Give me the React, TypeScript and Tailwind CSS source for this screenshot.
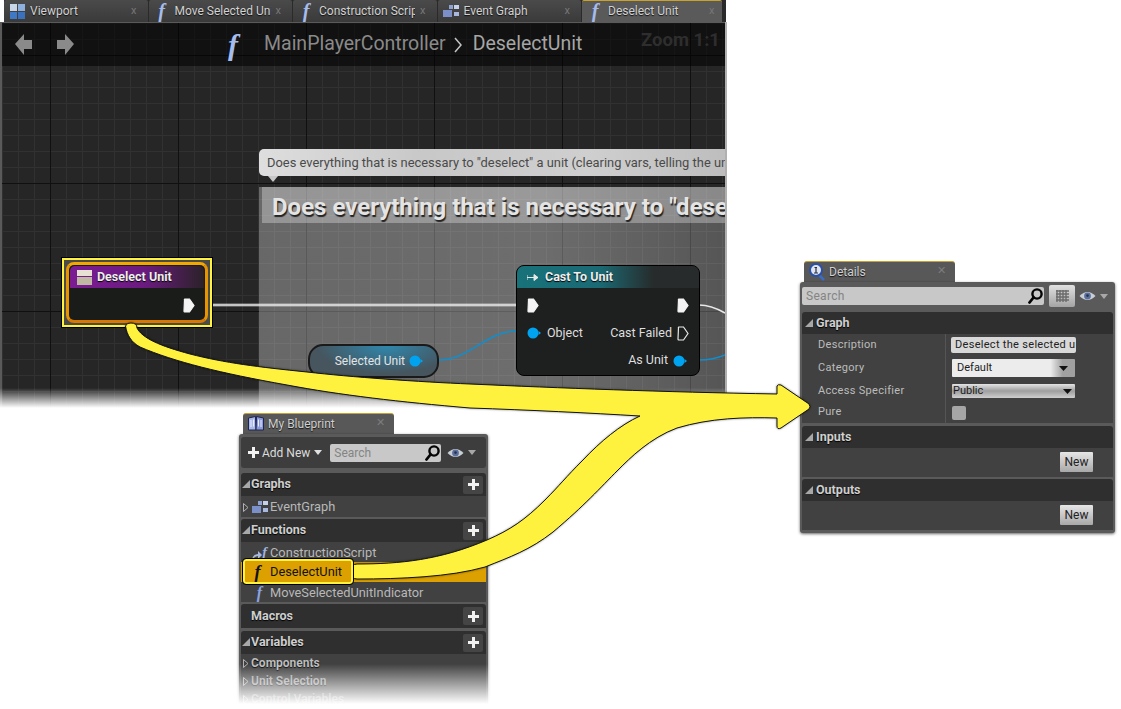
import React from 'react'

const Fn = ({ className = '' }: { className?: string }) => (
  <span className={`font-['Liberation_Serif',serif] italic font-bold leading-none ${className}`}>f</span>
)

const GridIcon = ({ size = 15 }: { size?: number }) => (
  <svg width={size} height={size} viewBox="0 0 15 15">
    <rect x="0" y="0" width="7" height="7" fill="#c8d4e8" />
    <rect x="8" y="0" width="7" height="7" fill="#8fb0dc" />
    <rect x="0" y="8" width="7" height="7" fill="#3f78c4" />
    <rect x="8" y="8" width="7" height="7" fill="#3a70bc" />
  </svg>
)

const GraphIcon = ({ w = 16, h = 13 }: { w?: number; h?: number }) => (
  <svg width={w} height={h} viewBox="0 0 16 13">
    <rect x="6" y="0" width="4" height="4" fill="#8ea2d4" />
    <rect x="11" y="0" width="5" height="4" fill="#c5d0ea" />
    <rect x="0" y="5" width="9" height="7" fill="#7b90c8" />
    <rect x="11" y="7" width="5" height="4" fill="#a9b8de" />
  </svg>
)

const BookIcon = () => (
  <svg width="16" height="15" viewBox="0 0 16 15">
    <path d="M0.5 2 L7.5 0.5 L8 14 L0.5 14 Z" fill="#aab8e8" stroke="#1c2550" strokeWidth="1" />
    <path d="M15.5 2 L8.5 0.5 L8 14 L15.5 14 Z" fill="#8c9ad8" stroke="#1c2550" strokeWidth="1" />
    <path d="M3 4v7M5.5 3.5v7M10.5 3.5v7M13 4v7" stroke="#e8ecff" strokeWidth="1" />
  </svg>
)

const InfoIcon = () => (
  <svg width="16" height="18" viewBox="0 0 16 18">
    <path d="M10 12 L15 17" stroke="#3a6cc8" strokeWidth="2.5" />
    <circle cx="7" cy="7" r="6" fill="#dfe4ee" stroke="#2a50a8" strokeWidth="2" />
    <path d="M5.5 4.5h2.5M7 4.5v5M5 10h4" stroke="#27304a" strokeWidth="1.2" fill="none" />
  </svg>
)

const Eye = () => (
  <span className="flex items-center gap-[4px]">
    <svg width="17" height="10" viewBox="0 0 17 10">
      <path d="M0.5 5 Q8.5 -3 16.5 5 Q8.5 13 0.5 5 Z" fill="#c9ced6" />
      <circle cx="8.5" cy="5" r="3.4" fill="#5b6f9c" />
      <circle cx="8.5" cy="4.6" r="1.3" fill="#27324f" />
    </svg>
    <svg width="8" height="5" viewBox="0 0 8 5"><path d="M0 0h8L4 5z" fill="#a8a8a8" /></svg>
  </span>
)

const Magnifier = () => (
  <svg width="15" height="16" viewBox="0 0 15 16">
    <circle cx="9" cy="6" r="4.6" fill="none" stroke="#050505" strokeWidth="2.4" />
    <path d="M5.5 9.5 L1.5 14.5" stroke="#050505" strokeWidth="2.8" strokeLinecap="round" />
  </svg>
)

const ExecPin = ({ hollow = false }: { hollow?: boolean }) => (
  <svg width="12" height="15" viewBox="0 0 12 15">
    <path
      d="M1.5 1.5 Q1 1 2 1 L6.5 1 L11 7.5 L6.5 14 L2 14 Q1 14 1 13 Z"
      fill={hollow ? 'none' : '#f4f4f4'}
      stroke={hollow ? '#e8e8e8' : '#f4f4f4'}
      strokeWidth="1.2"
    />
  </svg>
)

const DataPin = () => (
  <svg width="14" height="12" viewBox="0 0 14 12">
    <circle cx="6" cy="6" r="5.5" fill="#00a3ef" />
    <path d="M11.5 4 L14 6 L11.5 8 Z" fill="#00a3ef" />
  </svg>
)

const PlusBtn = () => (
  <span className="w-[20px] h-[18px] rounded-[2px] bg-[#454545] flex items-center justify-center mr-[3px]">
    <svg width="11" height="11" viewBox="0 0 11 11"><path d="M4 0h3v4h4v3H7v4H4V7H0V4h4z" fill="#f2f2f2" /></svg>
  </span>
)

const Tri = () => (
  <svg width="8" height="8" viewBox="0 0 8 8" className="shrink-0"><path d="M8 0v8H0z" fill="#a8a8a8" /></svg>
)

const Open = () => (
  <svg width="6" height="9" viewBox="0 0 6 9" className="shrink-0"><path d="M0.5 0.5L5 4.5L0.5 8.5Z" fill="none" stroke="#b0b0b0" /></svg>
)

type TabProps = { icon: React.ReactNode; label: string; active?: boolean }

const Tab = ({ icon, label, active }: TabProps) => (
  <div
    className={`h-[22px] shrink-0 flex items-center rounded-t-[2px] ${
      active ? 'w-[140px] pb-px bg-[#5a5a5a] border-t border-[#c9a227]' : 'w-[143.5px] bg-[linear-gradient(#4a4a4a,#3a3a3a)]'
    }`}
  >
    <span className="w-[26px] flex justify-center shrink-0">{icon}</span>
    <span className="w-[96px] overflow-hidden whitespace-nowrap text-[12px] text-[#d2d2d2] [text-shadow:0_1px_1px_#111]">{label}</span>
    <span className="ml-[5px] text-[11px] text-[#777]">x</span>
  </div>
)

const PanelTab = ({ icon, label, className }: { icon: React.ReactNode; label: string; className: string }) => (
  <div className={`h-[22px] bg-[#585858] rounded-t-[3px] border-t border-[#c9a227] flex items-center pl-[5px] pb-[2px] ${className}`}>
    <span className="w-[20px] shrink-0 flex">{icon}</span>
    <span className="text-[12px] text-[#d0d0d0] [text-shadow:0_1px_1px_#111]">{label}</span>
    <span className="ml-auto mr-[9px] text-[11px] text-[#7c7c7c]">✕</span>
  </div>
)

const Header = ({ title, plus, open = true, wide }: { title: string; plus?: boolean; open?: boolean; wide?: boolean }) => (
  <div className="flex items-center bg-[#2f2f2f] rounded-t-[3px] text-[12.5px] font-bold text-[#cfcfcf] [text-shadow:0_1px_1px_#000] h-full">
    <span className={`flex justify-end -mt-[1px] ${wide ? 'w-[11px] mr-[3px]' : 'w-[9px] mr-[1px]'}`}>{open && <Tri />}</span>
    <span>{title}</span>
    {plus && <span className="ml-auto"><PlusBtn /></span>}
  </div>
)

const DetailRow = ({ label, h, children }: { label: string; h: string; children: React.ReactNode }) => (
  <div className={`flex items-center ${h}`}>
    <span className="w-[143px] pl-[16px] text-[11px] tracking-[0.3px] text-[#bcbcbc]">{label}</span>
    <span className="border-l border-[#555] h-full flex items-center pl-[5px]">{children}</span>
  </div>
)

const NewBtn = () => (
  <div className="flex-1 flex justify-end items-start pt-[4px] pr-[20px] bg-[#414141]">
    <span className="w-[33px] h-[20px] flex items-center justify-center text-[12px] text-[#222] rounded-[1px] bg-[linear-gradient(#e6e6e6,#a8a8a8)]">New</span>
  </div>
)

const Details = () => (
  <div className="absolute left-[800px] top-[261px] w-[315px]">
    <PanelTab className="ml-[4px] w-[151px]" icon={<InfoIcon />} label="Details" />
    <div className="h-[251px] -mt-px bg-[#5a5a5a] rounded-[3px] shadow-[0_1px_3px_rgba(0,0,0,0.6)] pt-[3px] px-[2px] pb-[3px] flex flex-col relative">
      <div className="flex items-center h-[22px] mb-[5px]">
        <div className="w-[242px] h-[18px] bg-[#c8c8c8] rounded-[2px] flex items-center justify-between pl-[4px] pr-[1px] text-[12px] text-[#848484] tracking-[0.3px]">
          Search <Magnifier />
        </div>
        <div className="ml-[5px] w-[26px] h-[22px] rounded-[2px] bg-[linear-gradient(#e0e0e0,#a4a4a4)] flex items-center justify-center">
          <svg width="13" height="13" viewBox="0 0 13 13">
            <path d="M0 1h13M0 4h13M0 7h13M0 10h13M1 0v12M4 0v12M7 0v12M10 0v12" stroke="#6c6c6c" strokeWidth="1.4" />
          </svg>
        </div>
        <span className="ml-[4px]"><Eye /></span>
      </div>
      <div className="h-[22px]"><Header wide title="Graph" /></div>
      <div className="h-[89px] bg-[#414141] flex flex-col text-[11px]">
        <DetailRow label="Description" h="h-[22px]">
          <span className="w-[125px] h-[16px] rounded-[2px] bg-[#d8d8d8] text-[#222] px-[4px] overflow-hidden whitespace-nowrap leading-[16px] tracking-[0.3px]">Deselect the selected unit</span>
        </DetailRow>
        <DetailRow label="Category" h="h-[24px]">
          <span className="w-[123px] h-[18px] ml-[1px] rounded-[1px] bg-[linear-gradient(90deg,#ececec_80%,#a0a0a0_90%)] flex items-center justify-between pl-[5px] pr-[7px] text-[#1c1c1c]">
            Default <svg width="9" height="5" viewBox="0 0 9 5"><path d="M0 0h9L4.5 5z" fill="#111" /></svg>
          </span>
        </DetailRow>
        <DetailRow label="Access Specifier" h="h-[22px]">
          <span className="w-[123px] h-[14px] ml-[1px] rounded-[1px] bg-[linear-gradient(#e4e4e4,#9e9e9e_50%,#cfcfcf)] flex items-center justify-between pl-[1px] pr-[3px] text-[#1c1c1c]">
            Public <svg width="9" height="5" viewBox="0 0 9 5"><path d="M0 0h9L4.5 5z" fill="#111" /></svg>
          </span>
        </DetailRow>
        <DetailRow label="Pure" h="h-[21px]">
          <span className="w-[14px] h-[14px] ml-[1px] rounded-[2px] bg-[#a6a6a6]" />
        </DetailRow>
      </div>
      <div className="h-[22px] mt-[3px]"><Header wide title="Inputs" /></div>
      <div className="h-[29px] flex"><NewBtn /></div>
      <div className="h-[22px] mt-[2px]"><Header wide title="Outputs" /></div>
      <div className="flex-1 flex"><NewBtn /></div>
    </div>
  </div>
)

const TreeRow = ({ icon, label, h = 'h-[20px]', open }: { icon?: React.ReactNode; label: string; h?: string; open?: boolean }) => (
  <div className={`flex items-center ${h} pt-[2px] text-[12.8px] text-[#b8b8b8]`}>
    <span className="w-[8px] pl-[2px] shrink-0">{open && <Open />}</span>
    <span className="w-[21px] shrink-0 flex justify-center">{icon}</span>
    <span>{label}</span>
  </div>
)

const VarRow = ({ label, h, color }: { label: string; h: string; color: string }) => (
  <div className={`flex items-center ${h} text-[12px] font-bold ${color} [text-shadow:0_1px_1px_#000]`}>
    <span className="w-[10px] pl-[2px]"><Open /></span>
    <span>{label}</span>
  </div>
)

const Blueprint = () => (
  <div className="absolute left-[239px] top-[413px] w-[249px] h-[295px]">
    <PanelTab className="ml-[4px] w-[151px]" icon={<BookIcon />} label="My Blueprint" />
    <div className="h-[274px] -mt-px bg-[#5a5a5a] rounded-t-[3px] shadow-[0_1px_3px_rgba(0,0,0,0.6)] px-[2px] pt-[3px] flex flex-col">
      <div className="h-[31px] shrink-0 rounded-[3px] bg-[#3d3d3d] flex items-center pl-[7px] text-[12px] text-[#dcdcdc] mb-[5px]">
        <svg width="11" height="11" viewBox="0 0 11 11"><path d="M4 0h3v4h4v3H7v4H4V7H0V4h4z" fill="#f2f2f2" /></svg>
        <span className="ml-[3px]">Add New</span>
        <svg className="ml-[4px]" width="8" height="5" viewBox="0 0 8 5"><path d="M0 0h8L4 5z" fill="#e0e0e0" /></svg>
        <div className="ml-[8px] w-[111px] h-[18px] rounded-[2px] bg-[#c8c8c8] flex items-center justify-between pl-[4px] pr-[1px] text-[12px] text-[#848484]">
          Search <Magnifier />
        </div>
        <span className="ml-[6px]"><Eye /></span>
      </div>
      <div className="h-[23px] shrink-0"><Header title="Graphs" plus /></div>
      <div className="h-[21px] shrink-0 bg-[#414141] mb-[2px]">
        <TreeRow open icon={<GraphIcon />} label="EventGraph" />
      </div>
      <div className="h-[23px] shrink-0"><Header title="Functions" plus /></div>
      <div className="h-[60px] shrink-0 bg-[#414141] mb-[2px]">
        <TreeRow label="ConstructionScript" icon={
          <span className="flex items-end">
            <svg width="10" height="9" viewBox="0 0 10 9"><path d="M0 9 Q1 3 6 3 V0 L10 4 L6 8 V5 Q3 5 0 9Z" fill="#a8b8dc" /></svg>
            <Fn className="text-[14px] text-[#a0b4e4]" />
          </span>
        } />
        <div className="h-[20px] bg-[#dca000]" />
        <TreeRow label="MoveSelectedUnitIndicator" icon={<Fn className="text-[16px] text-[#8ca4e0]" />} />
      </div>
      <div className="h-[24px] shrink-0 mb-[3px]"><Header title="Macros" plus open={false} /></div>
      <div className="h-[23px] shrink-0"><Header title="Variables" plus /></div>
      <div className="flex-1 min-h-0 bg-[#414141] overflow-hidden">
        <VarRow label="Components" h="h-[18px]" color="text-[#bdbdbd]" />
        <VarRow label="Unit Selection" h="h-[18px]" color="text-[#a2a2a2]" />
        <VarRow label="Control Variables" h="h-[18px]" color="text-[#8c8c8c]" />
      </div>
    </div>
    <div className="absolute left-[-4px] right-[-4px] bottom-[4px] h-[40px] bg-[linear-gradient(transparent,#ffffff)]" />
    <div className="absolute left-[-4px] right-[-4px] bottom-[-4px] h-[8px] bg-white" />
  </div>
)

const DeselectChip = () => (
  <div className="absolute left-[243px] top-[559px] w-[110px] h-[25px] pt-px rounded-[3px] bg-[#dca000] border-2 border-[#fff23f] outline outline-1 outline-black flex items-center text-[12.8px] text-[#111]">
    <span className="w-[25px] flex justify-center"><Fn className="text-[18px] text-[#111]" /></span>
    <span>DeselectUnit</span>
  </div>
)

const DeselectNode = () => (
  <div className="absolute left-[62px] top-[236px] w-[150px] h-[69px] bg-[#4a4a4a] border-2 border-[#fff23f] outline outline-1 outline-black p-[2px]">
    <div className="h-full rounded-[8px] border-[3px] border-t-[#f2a800] border-x-[#e89400] border-b-[#d97800] bg-[#1a1c1a] overflow-hidden p-[1px] flex flex-col">
      <div className="h-[22px] shrink-0 rounded-t-[5px] bg-[linear-gradient(90deg,#7b1c93,#6b1a80_55%,#2a2228)] flex items-center pl-[7px] text-[12.5px] font-bold text-[#eeeeee] [text-shadow:0_1px_1px_#000]">
        <svg className="shrink-0 mr-[5px]" width="15" height="15" viewBox="0 0 15 15">
          <rect width="15" height="6" fill="#e6e1d2" />
          <rect y="7" width="15" height="8" fill="#bfb8a3" />
        </svg>
        Deselect Unit
      </div>
      <div className="flex-1 flex items-center justify-end pr-[9px] pt-[3px]"><ExecPin /></div>
    </div>
  </div>
)

const CastNode = () => (
  <div className="absolute left-[516px] top-[243px] w-[184px] h-[111px] rounded-[8px] bg-[#1e2020] border border-black overflow-hidden flex flex-col text-[12.5px] text-[#dedede]">
    <div className="h-[22px] shrink-0 bg-[linear-gradient(90deg,#18727a,#1a6a74_45%,#272b2b_75%)] flex items-center pl-[10px] font-bold text-[#eeeeee] [text-shadow:0_1px_1px_#000]">
      <svg className="mr-[5px]" width="13" height="7" viewBox="0 0 13 7">
        <path d="M0 3.5h11M0 1v5M7 0.5L11 3.5L7 6.5z" stroke="#e8e8e8" strokeWidth="1" fill="#e8e8e8" />
      </svg>
      Cast To Unit
    </div>
    <div className="h-[34px] shrink-0 flex items-center justify-between px-[10px]"><ExecPin /><ExecPin /></div>
    <div className="h-[22px] shrink-0 flex items-center justify-between px-[10px]">
      <span className="flex items-center gap-[6px]"><DataPin />Object</span>
      <span className="flex items-center gap-[5px]">Cast Failed<ExecPin hollow /></span>
    </div>
    <div className="flex-1 flex items-center justify-end pr-[12px] pt-[2px] gap-[5px]">As Unit<DataPin /></div>
  </div>
)

const SelectedNode = () => (
  <div className="absolute left-[308px] top-[322px] w-[131px] h-[34px] rounded-[15px] border-2 border-[#1a1a1a] bg-[radial-gradient(ellipse_at_60%_0%,#2f87ad,#46555e_65%)] flex items-center justify-end pr-[14px] gap-[4px] text-[12px] text-[#e4e4e4]">
    Selected Unit <DataPin />
  </div>
)

const GraphWindow = () => (
  <div className="absolute left-0 top-0 w-[727px] h-[408px] flex flex-col">
    <div className="flex gap-px ml-[4px] bg-[#2a2a2a] h-[22px] w-[722px] shrink-0">
      <Tab icon={<GridIcon />} label="Viewport" />
      <Tab icon={<Fn className="text-[20px] text-[#a5bcec]" />} label="Move Selected Unit Indicator" />
      <Tab icon={<Fn className="text-[20px] text-[#a5bcec]" />} label="Construction Script" />
      <Tab icon={<GraphIcon />} label="Event Graph" />
      <Tab active icon={<Fn className="text-[20px] text-[#a5bcec]" />} label="Deselect Unit" />
    </div>
    <div className="relative flex-1 overflow-hidden border-r-2 border-[#b0b0b0] bg-[#262626] bg-[linear-gradient(#101010_1px,transparent_1px),linear-gradient(90deg,#101010_1px,transparent_1px),linear-gradient(#313131_1px,transparent_1px),linear-gradient(90deg,#313131_1px,transparent_1px)] bg-size-[128px_128px,128px_128px,16px_16px,16px_16px] bg-position-[50px_33px,50px_33px,50px_33px,50px_33px]">
      <div className="h-[43px] mt-px bg-black/55 flex items-center pl-[15px] relative">
        <svg width="17" height="21" viewBox="0 0 17 21"><path d="M17 6H9V0L0 10l9 11v-6h8z" fill="#8a8a8a" /></svg>
        <svg className="ml-[25px]" width="17" height="21" viewBox="0 0 17 21"><path d="M0 6h8V0l9 10-9 11v-6H0z" fill="#8a8a8a" /></svg>
        <Fn className="ml-[154px] text-[30px] text-[#a5bcec]" />
        <span className="ml-[26px] -mt-[2px] text-[19.5px] text-[#8a8a8a]">MainPlayerController</span>
        <svg className="ml-[8px]" width="9" height="16" viewBox="0 0 9 16"><path d="M1 1l6 7-6 7" stroke="#c4c4c4" strokeWidth="1.5" fill="none" /></svg>
        <span className="ml-[10px] -mt-[2px] text-[19.5px] text-[#a6a6a6]">DeselectUnit</span>
        <span className="ml-auto mr-[5px] mb-[7px] text-[18.5px] font-bold text-[#2e2e2e]">Zoom 1:1</span>
      </div>

      {/* comment bubble + box */}
      <div className="absolute left-[259px] top-[127px] w-[470px] h-[27px] rounded-[5px] bg-[linear-gradient(90deg,#dedede,#c8c8c8_35%,#cfcfcf_70%,#bdbdbd)] px-[8px] flex items-center text-[12.9px] text-[#4a4a4a] whitespace-nowrap overflow-hidden">
        Does everything that is necessary to "deselect" a unit (clearing vars, telling the unit it is no longer selected)
      </div>
      <div className="absolute left-[268px] top-[154px] w-0 h-0 border-x-[5px] border-x-transparent border-t-[6px] border-t-[#c8c8c8]" />
      <div className="absolute left-[259px] top-[165px] right-0 bottom-0 bg-[linear-gradient(90deg,rgba(255,255,255,0.3),rgba(255,255,255,0.33)_60%,rgba(255,255,255,0.22))] overflow-hidden">
        <div className="h-[36px] ml-[3px] bg-white/30 pl-[10px] pt-[4px] flex items-center text-[24px] font-bold text-[#e4e4e4] whitespace-nowrap [text-shadow:1px_2px_1px_#222]">
          Does everything that is necessary to "deselect" a unit
        </div>
      </div>

      <svg className="absolute inset-0" width="725" height="386" viewBox="0 0 725 386" fill="none">
        <path d="M212 283 H516" stroke="#ffffff" strokeOpacity="0.25" strokeWidth="4" />
        <path d="M212 283 H516" stroke="#e8e8e8" strokeWidth="1.6" />
        <path d="M699 283 C710 283 718 287 725 291" stroke="#e8e8e8" strokeWidth="1.6" />
        <path d="M438 338 C470 338 485 310 516 309" stroke="#0d8fd0" strokeWidth="1.5" />
        <path d="M699 338 C710 338 718 336 725 333" stroke="#0d8fd0" strokeWidth="1.5" />
      </svg>

      <DeselectNode />
      <SelectedNode />
      <CastNode />

      <div className="absolute inset-0 shadow-[inset_2px_1px_0_#5a5a5a]" />
      <div className="absolute left-0 right-0 bottom-0 h-[20px] bg-[linear-gradient(transparent,#ffffff)]" />
    </div>
  </div>
)

const Arrow = () => (
  <svg className="absolute inset-0 pointer-events-none drop-shadow-[0_0_1px_rgba(0,0,0,0.45)]" width="1121" height="709" viewBox="0 0 1121 709">
    <path
      fill="#fff23f"
      stroke="#111"
      strokeWidth="1"
      strokeLinejoin="round"
      d="M125.5 326 Q127 322.5 131 323 Q137 323 137 328 C142 338 160 346 190 354 C225 363 258 367 307 372 C350 377 420 382 470 384 C560 388 660 392 777 394 L777 386 Q778 384 781 385 L809 404 Q811 407 809 409 L781 428 Q777 430 777 426 L777 418 C745 417 710 418 677 428 C650 438 630 458 618 470 C600 488 585 505 553 532 C530 550 510 557 485 567 C450 577 400 579 357 579 Q351 579 351 572 Q351 564 357 564 C400 564 440 560 487 540 C510 530 525 520 545 500 C560 485 565 478 583 460 C600 442 620 425 640 416 C590 413 530 410 470 408 C400 402 340 395 287 385 C220 373 175 362 140 347 C131 342 127 335 125.5 326 Z"
    />
  </svg>
)

export default function App() {
  return (
    <div className="relative w-[1121px] h-[709px] bg-white overflow-hidden font-['Roboto',sans-serif]">
      <GraphWindow />
      <Details />
      <Blueprint />
      <Arrow />
      <DeselectChip />
    </div>
  )
}
